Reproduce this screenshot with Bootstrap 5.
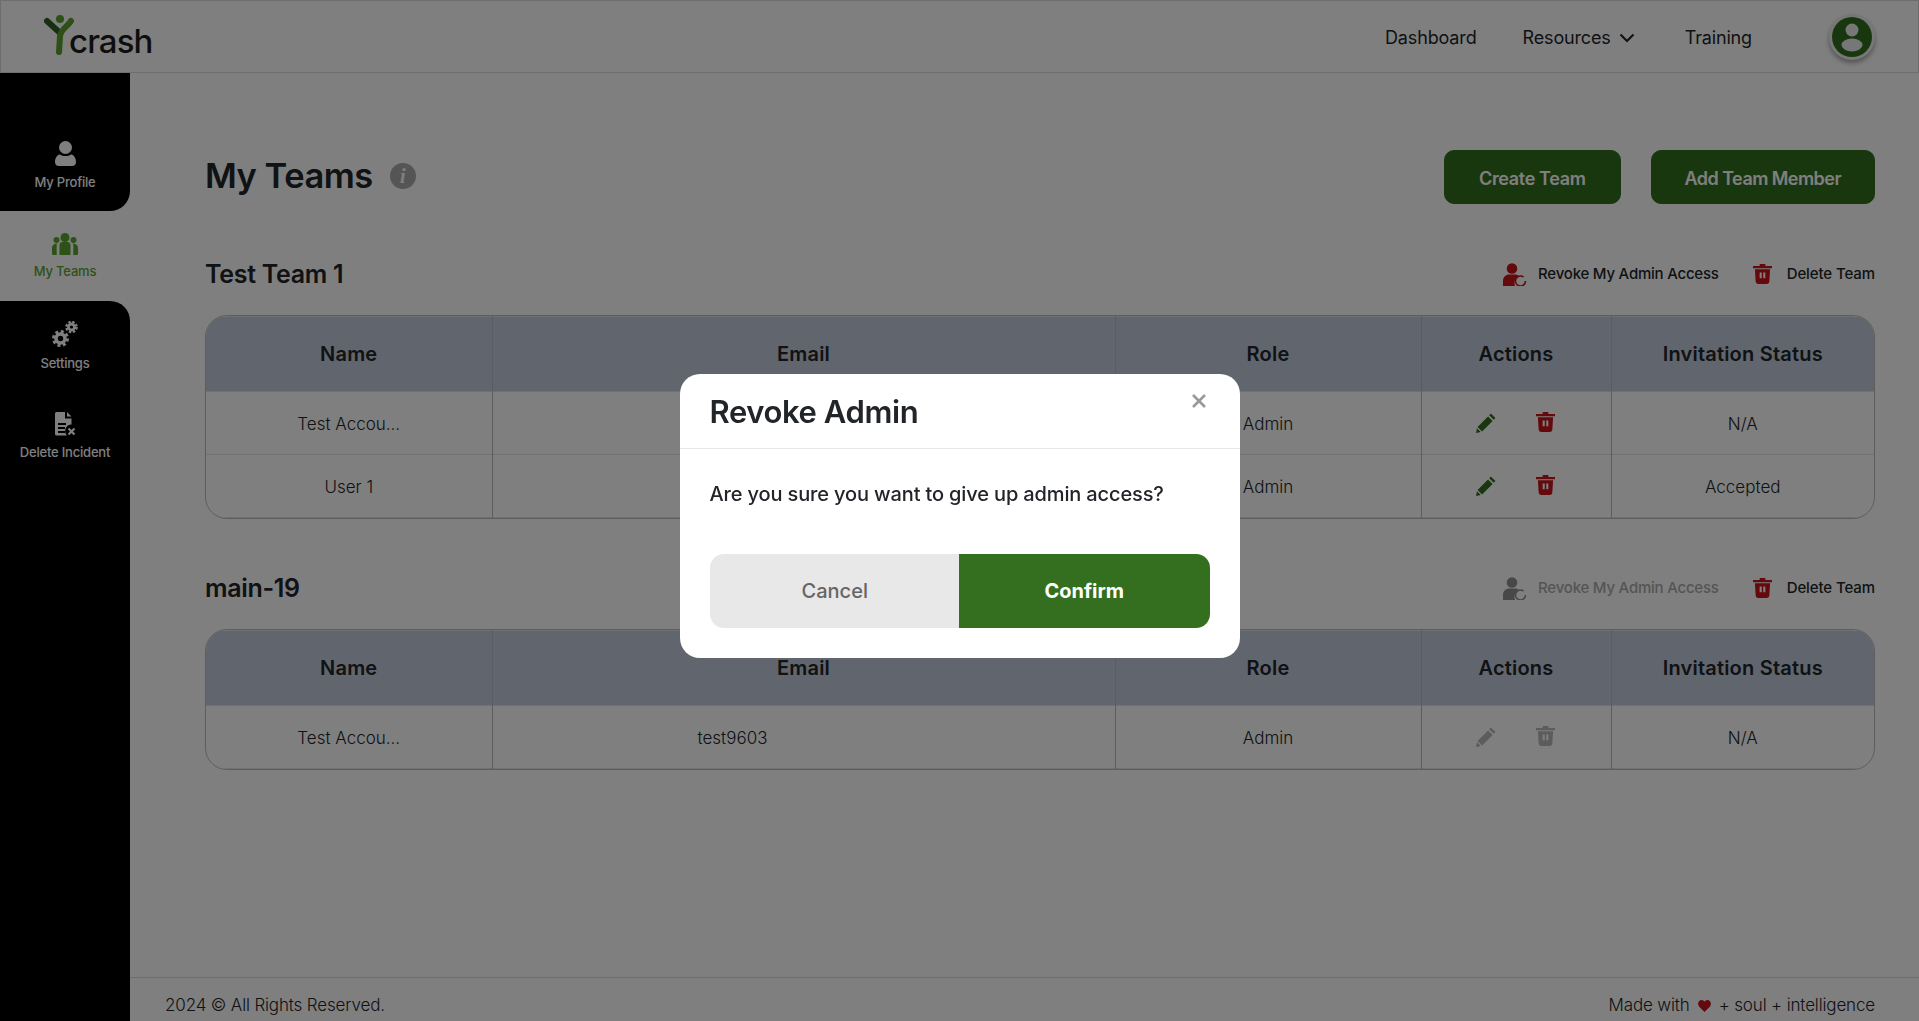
<!DOCTYPE html>
<html lang="en">
<head>
    <meta charset="UTF-8">
    <title>My Teams</title>
    <link href="https://cdn.jsdelivr.net/npm/bootstrap@5.3.0/dist/css/bootstrap.min.css" rel="stylesheet">
    <style>
        html, body { height: 100%; }
        body { font-family: Inter, "Noto Sans", sans-serif; color: #212529; background: #fff; overflow: hidden; }

        /* top bar */
        .top-bar { height: 73px; padding: 0; border: 1px solid #dcdcdc; }
        .logo-box { margin-left: 43px; height: 44px; margin-top: -2px; }
        .logo-word { font-size: 33px; font-weight: 500; letter-spacing: -.9px; color: #1c1c1c; line-height: 1; margin: 11px 0 0 -7px; }
        .top-link { font-size: 18px; font-weight: 400; color: #212529; letter-spacing: -.15px; text-decoration: none; }
        .top-links { gap: 46px; margin-right: 77px; padding-top: 2px; }
        .avatar-ring { width: 46px; height: 46px; border-radius: 50%; background: #eee; box-shadow: 0 3px 5px rgba(0,0,0,.35); display: flex; align-items: center; justify-content: center; margin-right: 43px; }

        /* sidebar */
        .side-col { width: 130px; flex: none; }
        .side-black { background: #000; color: #fff; }
        .side-first { height: 138px; border-bottom-right-radius: 20px; padding-top: 68px; }
        .side-second { flex: 1; border-top-right-radius: 20px; padding-top: 20px; }
        .side-active { height: 90px; color: #5aa32f; padding-top: 22px; }
        .side-item { display: flex; flex-direction: column; align-items: center; font-size: 13px; font-weight: 500; letter-spacing: -.2px; line-height: 16px; }
        .side-item svg { margin-bottom: 8px; }
        .side-gap { height: 41px; }

        /* page */
        .page-col { min-width: 0; }
        .page-body { padding: 0 44px 0 75px; }
        .page-title { font-size: 34.500px; font-weight: 600; letter-spacing: -.5px; margin: 0; line-height: 40px; }
        .title-wrap { height: 52px; }
        .info-dot { width: 26px; height: 26px; border-radius: 50%; background: #aaa; color: #fff; font: italic bold 20px "Liberation Serif", serif; display: flex; align-items: center; justify-content: center; margin-left: 17px; }
        .head-row { padding-top: 77px; height: 131px; }
        .head-btns { gap: 30px; }
        .green-btn { background: #336f1e; border-color: #336f1e; color: #fff; font-size: 18px; font-weight: 600; letter-spacing: -.35px; height: 54px; border-radius: 10px; padding: 2px 34px 0; }
        .green-btn.add-btn { letter-spacing: -.55px; padding: 2px 33px 0; }
        .team-head { height: 48px; }
        .team-head h2 { font-size: 25px; font-weight: 600; letter-spacing: -.3px; margin: 0; }
        .head-action { font-size: 15px; font-weight: 500; letter-spacing: -.22px; display: flex; align-items: center; gap: 11px; color: #212529; }
        .head-action.is-off { color: #aaa; }
        .head-delete { gap: 15px; letter-spacing: -.1px; }
        .team-one { margin-top: 46px; }
        .team-two { margin-top: 45px; }
        .team-actions { gap: 34px; }

        /* tables */
        .team-table-box { border: 1px solid #bbb; border-radius: 22px; overflow: hidden; margin-top: 17px; }
        .team-table { table-layout: fixed; margin: 0; text-align: center; }
        .team-table th { background: #c1cbdc; font-size: 20px; font-weight: 600; letter-spacing: .2px; height: 75px; vertical-align: middle; border-color: #b4bbc8; }
        .team-table td { font-size: 17px; font-weight: 300; height: 63px; vertical-align: middle; padding: 3px 0 0; border-color: #bbb; color: #212529; }
        .team-table tr:last-child td { border-bottom: 0; }
        .team-table th:first-child, .team-table td:first-child { border-left: 0; }
        .team-table th:last-child, .team-table td:last-child { border-right: 0; }
        .team-table th { border-top: 0; }
        .col-name { width: 286px; }
        .col-mail { width: 623px; }
        .col-role { width: 306px; }
        .col-acts { width: 190px; }
        .mail-cell { padding-right: 142px !important; }
        .act-icons { gap: 39px; margin: -4px 1px 0 0; }

        /* footer */
        .page-foot { margin-top: auto; height: 44px; border-top: 1px solid #ddd; padding: 12px 44px 0 35px; font-size: 17px; font-weight: 300; letter-spacing: -.15px; }

        /* dialog */
        .revoke-dialog { max-width: 560px; margin: 374px auto 0; }
        .revoke-box { border: 0; border-radius: 20px; }
        .revoke-head { height: 75px; padding: 2px 30px 0; border-bottom: 1px solid #e6e6e6; align-items: center; }
        .revoke-head h5 { font-size: 31px; font-weight: 600; letter-spacing: -.4px; margin: 0; }
        .revoke-close { position: absolute; top: 19px; right: 33px; width: 16px; height: 16px; padding: 0; border: 0; background: none; color: #999; display: flex; }
        .revoke-body { padding: 31px 30px 30px; }
        .revoke-body p { font-size: 20px; font-weight: 500; letter-spacing: -.14px; margin: 0 0 46px; line-height: 28px; }
        .btn-group > .revoke-btn { flex: 1 1 0; height: 74px; font-size: 20px; border: 0; border-radius: 14px; }
        .btn-group > .revoke-cancel { background: #e8e8e8; color: #666; font-weight: 500; border-top-right-radius: 0; border-bottom-right-radius: 0; }
        .btn-group > .revoke-ok { background: #336f1e; color: #fff; font-weight: 700; border-top-left-radius: 0; border-bottom-left-radius: 0; margin-left: 0; }
    </style>
</head>
<body>
    <svg width="0" height="0" class="d-none">
        <symbol id="i-pencil" viewBox="0 0 22 22">
            <path d="M15.600 1.600 20.400 6.400 18.600 8.200 13.800 3.400ZM12.600 4.600 17.400 9.400 6.400 20.400 1.600 15.600ZM1 17 5 21 0 22Z" fill="currentColor"/>
        </symbol>
        <symbol id="i-trash" viewBox="0 0 20 21">
            <path d="M7 0h6v2h7v2.400H0V2h7ZM2 5.500h16l-.8 13a2.500 2.500 0 0 1-2.500 2.500H5.300a2.500 2.500 0 0 1-2.500-2.500ZM7 9v6h2.200V9Zm3.800 0v6H13V9Z" fill="currentColor" fill-rule="evenodd"/>
        </symbol>
        <symbol id="i-revoke" viewBox="0 0 24 23">
            <circle cx="9" cy="5.500" r="5.300" fill="currentColor"/>
            <path d="M0 23v-5c0-4 3-6.500 6-6.500h6c1.500 0 3 .5 4 1.500a8 8 0 0 0-4.500 7c0 1.200.2 2.200.6 3Z" fill="currentColor"/>
            <path d="M22.500 18a5 5 0 1 1-2-4" fill="none" stroke="currentColor" stroke-width="1.600"/>
        </symbol>
    </svg>

    <nav class="navbar top-bar bg-white">
        <div class="d-flex w-100 align-items-center justify-content-between">
            <div class="d-flex logo-box align-items-start">
                <svg width="32" height="42" viewBox="0 0 32 42">
                    <path d="M3 7 15 18" stroke="#2f5f27" stroke-width="6" stroke-linecap="round"/>
                    <path d="M27 7C23 13 17 15 16 22L15 38" fill="none" stroke="#5c9f2e" stroke-width="6" stroke-linecap="round"/>
                    <circle cx="16" cy="5" r="4" fill="#5c9f2e"/>
                </svg>
                <span class="logo-word">crash</span>
            </div>
            <div class="d-flex align-items-center">
                <div class="d-flex align-items-center top-links">
                    <a class="top-link" href="#">Dashboard</a>
                    <a class="top-link d-flex align-items-center gap-2" href="#">Resources
                        <svg width="16" height="10" viewBox="0 0 16 10"><path d="M1.500 1.500 8 8l6.500-6.500" fill="none" stroke="#212529" stroke-width="2.200"/></svg>
                    </a>
                    <a class="top-link ms-1" href="#">Training</a>
                </div>
                <div class="avatar-ring">
                    <svg width="40" height="40" viewBox="0 0 40 40">
                        <circle cx="20" cy="20" r="20" fill="#336f1e"/>
                        <circle cx="20" cy="13" r="6.500" fill="#eee"/>
                        <ellipse cx="20" cy="28" rx="10.500" ry="6.500" fill="#eee"/>
                    </svg>
                </div>
            </div>
        </div>
    </nav>

    <div class="d-flex" style="height: 948px;">
        <aside class="side-col d-flex flex-column">
            <div class="side-black side-first">
                <div class="side-item">
                    <svg width="21" height="25" viewBox="0 0 21 25"><circle cx="10.500" cy="6.500" r="6.500" fill="currentColor"/><path d="M0 21c0-5 3-7.500 5-7.500 1.500 1 3.500 1.500 5.500 1.500s4-.5 5.500-1.500c2 0 5 2.500 5 7.500 0 2.500-1.500 4-4 4H4c-2.500 0-4-1.500-4-4Z" fill="currentColor"/></svg>
                    My Profile
                </div>
            </div>
            <div class="side-active">
                <div class="side-item">
                    <svg width="26" height="22" viewBox="0 0 26 22"><circle cx="13" cy="4.500" r="4.500" fill="currentColor"/><circle cx="4.500" cy="7" r="3" fill="currentColor"/><circle cx="21.500" cy="7" r="3" fill="currentColor"/><path d="M7.500 12c0-1.800 1.500-3 3-3h5c1.500 0 3 1.200 3 3v10h-11ZM0 15c0-3 2-4.500 5.500-4.500-.5.500-.8 1-.8 2V22H1.500A1.500 1.500 0 0 1 0 20.500ZM26 15c0-3-2-4.500-5.500-4.500.5.500.8 1 .8 2V22h3.200a1.500 1.500 0 0 0 1.500-1.500Z" fill="currentColor"/></svg>
                    My Teams
                </div>
            </div>
            <div class="side-black side-second">
                <div class="side-item">
                    <svg width="26" height="26" viewBox="0 0 26 26" fill="none" stroke="currentColor">
                        <circle cx="8.500" cy="17.500" r="4.500" stroke-width="3.500"/>
                        <circle cx="8.500" cy="17.500" r="7" stroke-width="3" stroke-dasharray="3 2.500"/>
                        <circle cx="19.500" cy="6" r="3" stroke-width="2.800"/>
                        <circle cx="19.500" cy="6" r="5" stroke-width="2.600" stroke-dasharray="2.400 1.550"/>
                    </svg>
                    Settings
                </div>
                <div class="side-gap"></div>
                <div class="side-item">
                    <svg width="21" height="24" viewBox="0 0 21 24">
                        <path d="M1.500 0H10v6.500h6.500v6a6.500 6.500 0 0 0-4.500 11H1.500A1.500 1.500 0 0 1 0 22V1.500A1.500 1.500 0 0 1 1.500 0ZM12 0l4.500 4.500H12ZM3 11v2h8v-2Zm0 4v2h7v-2Zm0 4v2h7v-2Z" fill="currentColor" fill-rule="evenodd"/>
                        <path d="M13.500 16.500l6 6m0-6-6 6" stroke="currentColor" stroke-width="2.200" fill="none"/>
                    </svg>
                    Delete Incident
                </div>
            </div>
        </aside>

        <main class="page-col flex-grow-1 d-flex flex-column">
            <div class="page-body">
                <div class="d-flex justify-content-between head-row">
                    <div class="d-flex align-items-center align-self-start title-wrap">
                        <h1 class="page-title">My Teams</h1>
                        <span class="info-dot">i</span>
                    </div>
                    <div class="d-flex head-btns align-self-start">
                        <button class="btn green-btn">Create Team</button>
                        <button class="btn green-btn add-btn">Add Team Member</button>
                    </div>
                </div>

                <section class="team-one">
                    <div class="d-flex justify-content-between align-items-center team-head">
                        <h2>Test Team 1</h2>
                        <div class="d-flex team-actions">
                            <span class="head-action"><svg width="24" height="23" style="color:#c8141a"><use href="#i-revoke"/></svg>Revoke My Admin Access</span>
                            <span class="head-action head-delete"><svg width="19" height="20" style="color:#c8141a"><use href="#i-trash"/></svg>Delete Team</span>
                        </div>
                    </div>
                    <div class="team-table-box">
                        <table class="table table-bordered team-table">
                            <colgroup><col class="col-name"><col class="col-mail"><col class="col-role"><col class="col-acts"><col></colgroup>
                            <thead><tr><th>Name</th><th>Email</th><th>Role</th><th>Actions</th><th>Invitation Status</th></tr></thead>
                            <tbody>
                                <tr>
                                    <td>Test Accou...</td><td class="mail-cell"></td><td>Admin</td>
                                    <td><div class="d-flex justify-content-center act-icons"><svg width="21" height="21" style="color:#336f1e"><use href="#i-pencil"/></svg><svg width="19" height="20" style="color:#c8141a"><use href="#i-trash"/></svg></div></td>
                                    <td>N/A</td>
                                </tr>
                                <tr>
                                    <td>User 1</td><td class="mail-cell"></td><td>Admin</td>
                                    <td><div class="d-flex justify-content-center act-icons"><svg width="21" height="21" style="color:#336f1e"><use href="#i-pencil"/></svg><svg width="19" height="20" style="color:#c8141a"><use href="#i-trash"/></svg></div></td>
                                    <td>Accepted</td>
                                </tr>
                            </tbody>
                        </table>
                    </div>
                </section>

                <section class="team-two">
                    <div class="d-flex justify-content-between align-items-center team-head">
                        <h2>main-19</h2>
                        <div class="d-flex team-actions">
                            <span class="head-action is-off"><svg width="24" height="23" style="color:#919191"><use href="#i-revoke"/></svg>Revoke My Admin Access</span>
                            <span class="head-action head-delete"><svg width="19" height="20" style="color:#c8141a"><use href="#i-trash"/></svg>Delete Team</span>
                        </div>
                    </div>
                    <div class="team-table-box">
                        <table class="table table-bordered team-table">
                            <colgroup><col class="col-name"><col class="col-mail"><col class="col-role"><col class="col-acts"><col></colgroup>
                            <thead><tr><th>Name</th><th>Email</th><th>Role</th><th>Actions</th><th>Invitation Status</th></tr></thead>
                            <tbody>
                                <tr>
                                    <td>Test Accou...</td><td class="mail-cell">test9603</td><td>Admin</td>
                                    <td><div class="d-flex justify-content-center act-icons"><svg width="21" height="21" style="color:#b9b9b9"><use href="#i-pencil"/></svg><svg width="19" height="20" style="color:#b9b9b9"><use href="#i-trash"/></svg></div></td>
                                    <td>N/A</td>
                                </tr>
                            </tbody>
                        </table>
                    </div>
                </section>
            </div>

            <footer class="page-foot d-flex justify-content-between align-items-center">
                <span>2024 © All Rights Reserved.</span>
                <span class="d-flex align-items-center">Made with
                    <svg class="mx-2" width="13" height="12" viewBox="0 0 13 12"><path d="M6.500 12 1 6.500C-1 4 .500 0 3.500 0c1.300 0 2.400.7 3 1.800C7.100.7 8.200 0 9.500 0c3 0 4.500 4 2.500 6.500Z" fill="#c8141a"/></svg>
                    + soul + intelligence</span>
            </footer>
        </main>
    </div>

    <div class="modal-backdrop fade show"></div>
    <div class="modal fade show d-block" tabindex="-1">
        <div class="modal-dialog revoke-dialog">
            <div class="modal-content revoke-box">
                <div class="modal-header revoke-head">
                    <h5 class="modal-title">Revoke Admin</h5>
                    <button type="button" class="revoke-close" aria-label="Close">
                        <svg width="16" height="16" viewBox="0 0 16 16"><path d="M2 2l12 12M14 2 2 14" stroke="currentColor" stroke-width="2.600"/></svg>
                    </button>
                </div>
                <div class="modal-body revoke-body">
                    <p>Are you sure you want to give up admin access?</p>
                    <div class="btn-group w-100">
                        <button class="btn revoke-btn revoke-cancel">Cancel</button>
                        <button class="btn revoke-btn revoke-ok">Confirm</button>
                    </div>
                </div>
            </div>
        </div>
    </div>
    <script src="https://cdn.jsdelivr.net/npm/bootstrap@5.3.0/dist/js/bootstrap.bundle.min.js"></script>
</body>
</html>
